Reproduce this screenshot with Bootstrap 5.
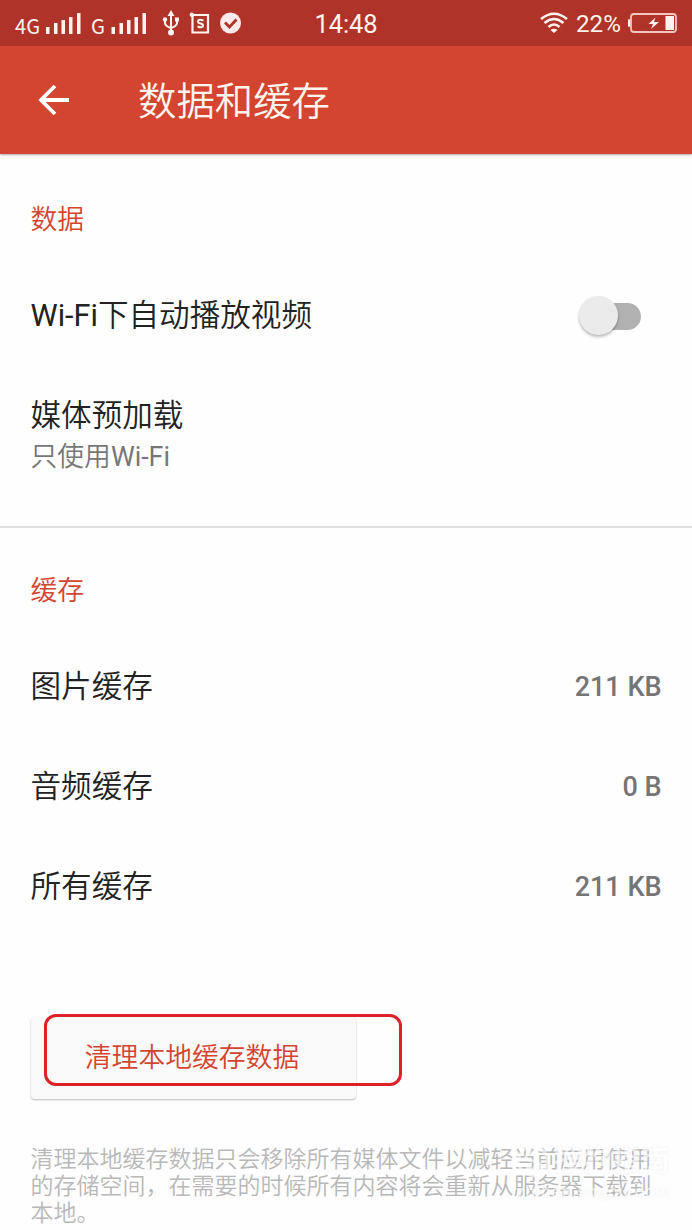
<!DOCTYPE html>
<html lang="zh-CN">
<head>
<meta charset="utf-8">
<meta name="viewport" content="width=device-width, initial-scale=1">
<title>数据和缓存</title>
<link href="https://cdn.jsdelivr.net/npm/bootstrap@5.3.0/dist/css/bootstrap.min.css" rel="stylesheet">
<style>
body{font-family:Roboto,"Noto Sans CJK SC",sans-serif;background:#fefefe;color:#222;height:1230px;overflow:hidden}
.statusbar{height:46px;background:#b03329;color:#fff3ee;font-size:26px;line-height:46px}
.statusbar svg{display:block;flex:none}
.clock{font-size:25.5px;line-height:46px;left:0;right:0;top:1px;letter-spacing:-.1px}
.appbar{height:108px;background:#d34530;color:#fff5ee;box-shadow:0 1px 2px rgba(60,40,60,.4);padding-left:36px}
.appbar h1{font-size:38.4px;font-weight:350;line-height:56px;margin:3px 0 0 66px}
.pane{padding-left:30.500px;padding-right:30.500px}
.pane-data{height:372px;padding-top:46px}
.pane-cache{padding-top:43px}
.sect{color:#d34530;font-size:26.8px;line-height:40px;font-weight:350}
.pane-cache .sect{margin-bottom:26px}
.item{font-size:30.6px;line-height:46px;font-weight:350}
.latin{font-weight:400}
.sub{color:#777;font-size:26.8px;line-height:36px;font-weight:350}
.preload{padding-top:29px}
.amount{color:#757575;font-size:27px;font-weight:500;line-height:46px}
.rowline{height:100px}
.rule{height:2px;background:#e0e0e0}
.toggle{width:62px;height:40px;margin-right:21px}
.toggle .track{left:12px;top:7px;width:50px;height:27px;border-radius:14px;background:#b1b1b1}
.toggle .knob{left:0;top:0;width:39px;height:39px;background:#ebebeb;box-shadow:0 2px 3px rgba(0,0,0,.28)}
.action{margin-top:80px}
.clearbtn{width:325px;height:82px;background:#f9f9f9;color:#d34530;font-size:26.8px;font-weight:350;border:0;border-radius:4px;box-shadow:0 1px 2px rgba(0,0,0,.28);padding:0 2px 0 0}
.callout-box{left:13.500px;top:-3px;width:358px;height:72px;border:3px solid #de2029;border-radius:12px}
.note{color:#b8b8b8;font-size:23px;line-height:27px;font-weight:350;white-space:nowrap;margin-top:47px}
.watermark{left:516px;top:1141px;color:#fff;opacity:.6;pointer-events:none;text-shadow:0 0 2px rgba(0,0,0,.12)}
.watermark .brand{font-size:29px;line-height:40px;font-weight:700}
.watermark .site{font-size:17px;line-height:20px;font-weight:500;letter-spacing:.9px}
</style>
<script src="https://cdn.jsdelivr.net/npm/bootstrap@5.3.0/dist/js/bootstrap.bundle.min.js"></script>
</head>
<body class="position-relative">
<header>
<div class="statusbar d-flex align-items-center position-relative">
<svg width="250" height="46" viewBox="0 0 250 46" fill="#fff3ee">
<text x="15" y="34" font-family="Noto Sans CJK SC" font-size="20" textLength="25" lengthAdjust="spacingAndGlyphs">4G</text>
<path d="M46 27h3.500v7H46zM54 23h3.500v11H54zM61.500 20H65v14h-3.500zM69 17h3.500v17H69zM77 13h3.500v21H77z"/>
<text x="91" y="34" font-family="Noto Sans CJK SC" font-size="20" textLength="14" lengthAdjust="spacingAndGlyphs">G</text>
<path d="M111.500 27h3.500v7h-3.500zM119.500 23h3.500v11h-3.500zM127 20h3.500v14H127zM134.500 17h3.500v17h-3.500zM142.500 13h3.500v21h-3.500z"/>
<path d="M171 10l3.500 6h-7z"/><circle cx="171" cy="32.500" r="3"/><circle cx="165" cy="19.500" r="2.200"/><path d="M175 17.500h4v4h-4z"/>
<path d="M171 14v18M165 20v3q0 3 6 5M177 20v3q0 3-6 5" fill="none" stroke="#fff3ee" stroke-width="2"/>
<path d="M192.500 15h15.500v17.500h-15.500z" fill="none" stroke="#fff3ee" stroke-width="2.200"/><circle cx="191.800" cy="14.800" r="2.200"/>
<path d="M203.500 20.500q-5.500-2-5.500 1 0 1.500 2.500 2t2.500 2q0 3-5.500 1" fill="none" stroke="#fff3ee" stroke-width="2"/>
<circle cx="230.500" cy="23" r="10.500" fill="#ffe9e9"/><path d="M225 22.500l4.500 4.500 7-7.500" fill="none" stroke="#b03329" stroke-width="2.800"/>
</svg>
<div class="clock position-absolute text-center">14:48</div>
<svg class="ms-auto" width="157" height="46" viewBox="535 0 157 46" fill="none" stroke="#fff3ee">
<path d="M541 19q13-10.500 26 0M544.500 23q9.500-8 19 0M548.500 27q5.500-5 11 0" stroke-width="2.600"/><path d="M550.500 30q3.500-2.500 7 0l-3.500 3z" fill="#fff3ee" stroke="none"/>
<text x="576" y="32" font-family="Roboto" font-size="24" textLength="45" lengthAdjust="spacingAndGlyphs" fill="#fff3ee" stroke="none">22%</text>
<rect x="631" y="14" width="45" height="18" rx="3" stroke="#f5c5be" stroke-width="1.800"/>
<path d="M628 19.500q1-.5 2 0v7q-1 .5-2 0z" fill="#fff3ee" stroke="none"/><path d="M665.500 16h8.500v14h-8.500zM655.500 17.500l-7 6.500h4.500l-2 5 8-7h-5z" fill="#fff3ee" stroke="none"/>
</svg>
</div>
<div class="appbar d-flex align-items-center position-relative">
<svg width="36" height="34" viewBox="0 0 36 34" fill="none" stroke="#fff" stroke-width="3.800"><path d="M33 17H6M19 3L5 17l14 14"/></svg>
<h1>数据和缓存</h1>
</div>
</header>
<main>
<section class="pane pane-data">
<h2 class="sect m-0">数据</h2>
<div class="rowline d-flex align-items-center justify-content-between mt-4 pt-1">
<span class="item"><span class="latin">Wi-Fi</span>下自动播放视频</span>
<div class="toggle position-relative"><span class="track position-absolute"></span><span class="knob rounded-circle position-absolute"></span></div>
</div>
<div class="preload"><div class="item">媒体预加载</div><div class="sub">只使用<span class="latin">Wi-Fi</span></div></div>
</section>
<div class="rule"></div>
<section class="pane pane-cache">
<h2 class="sect">缓存</h2>
<div class="rowline d-flex align-items-center justify-content-between"><span class="item">图片缓存</span><span class="amount">211 KB</span></div>
<div class="rowline d-flex align-items-center justify-content-between"><span class="item">音频缓存</span><span class="amount">0 B</span></div>
<div class="rowline d-flex align-items-center justify-content-between"><span class="item">所有缓存</span><span class="amount">211 KB</span></div>
<div class="action position-relative"><button class="clearbtn d-block">清理本地缓存数据</button><div class="callout-box position-absolute"></div></div>
<p class="note mb-0">清理本地缓存数据只会移除所有媒体文件以减轻当前应用使用<br>的存储空间，在需要的时候所有内容将会重新从服务器下载到<br>本地。</p>
</section>
</main>
<div class="watermark position-absolute">
<div class="d-flex align-items-center gap-1">
<svg width="34" height="36" viewBox="0 0 34 36" fill="none" stroke="#fff" stroke-width="3"><circle cx="17" cy="18" r="14.500"/><path d="M24 11q-14-3-14 3 0 3 7 4t7 4q0 6-14 3"/></svg>
<span class="brand">搜狗指南</span>
</div>
<div class="site">zhinan.sogou.com</div>
</div>
</body>
</html>
